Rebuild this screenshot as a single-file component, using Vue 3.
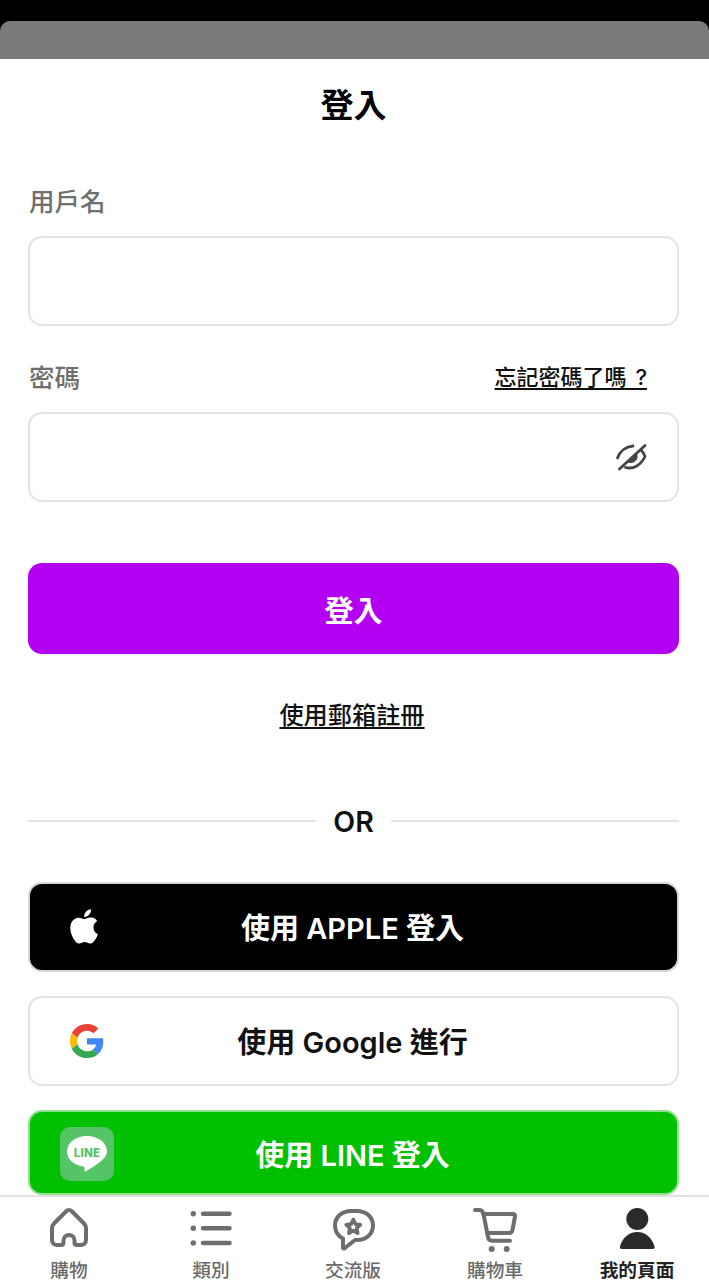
<script setup>
const tabs = [
  { key: 'home', label: '購物' },
  { key: 'list', label: '類別' },
  { key: 'chat', label: '交流版' },
  { key: 'cart', label: '購物車' },
  { key: 'user', label: '我的頁面', active: true }
]
</script>

<template>
  <div class="screen">
    <div class="backdrop"></div>
    <main class="sheet">
      <h1 class="title">登入</h1>

      <div class="label-row first"><span class="label">用戶名</span></div>
      <div class="field"></div>

      <div class="label-row second">
        <span class="label">密碼</span>
        <a class="forgot">忘記密碼了嗎 ?</a>
      </div>
      <div class="field with-icon">
        <svg class="eye" viewBox="0 0 32 32" width="32" height="32" fill="none" stroke="#444" stroke-width="2.8" stroke-linecap="round" stroke-linejoin="round">
          <path d="M2.500 17C5 10 11 5.500 18 5" />
          <path d="M10.500 26.500C18.500 28.500 26 24 30 15.500 29 12.500 27.500 10.500 26 9" />
          <path d="M4.500 28 30 4.500" />
          <path d="M14 21 21.500 13.500C23 17.500 19 22.500 14 21Z" fill="#444" stroke-width="1.500" />
        </svg>
      </div>

      <button class="btn primary">登入</button>
      <a class="register">使用郵箱註冊</a>

      <div class="divider"><span class="line"></span><span class="or">OR</span><span class="line"></span></div>

      <div class="social apple">
        <svg class="social-icon apple-icon" viewBox="0 2 20.500 24.500" width="29" height="35" fill="#fff">
          <path d="M17.300 14.800c0-3 2.500-4.400 2.600-4.500-1.400-2.100-3.600-2.400-4.400-2.400-1.900-.2-3.700 1.100-4.600 1.100-1 0-2.400-1.100-4-1-2 0-3.900 1.200-5 3-2.100 3.700-.5 9.200 1.500 12.200 1 1.500 2.200 3.100 3.800 3 1.500-.1 2.100-1 3.900-1 1.800 0 2.300 1 3.900 1 1.600 0 2.700-1.500 3.700-3 1.200-1.700 1.600-3.400 1.700-3.500-.1 0-3.100-1.200-3.100-4.900Z" />
          <path d="M14.300 5.800c.8-1 1.400-2.400 1.200-3.800-1.200.1-2.700.8-3.500 1.800-.8.900-1.400 2.300-1.300 3.700 1.400.1 2.800-.7 3.600-1.700Z" />
        </svg>
        使用 APPLE 登入
      </div>

      <div class="social google">
        <svg class="social-icon google-icon" viewBox="0 0 48 48" width="34" height="34">
          <path fill="#EA4335" d="M24 9.500c3.540 0 6.710 1.220 9.210 3.600l6.850-6.850C35.900 2.380 30.470 0 24 0 14.620 0 6.510 5.380 2.560 13.220l7.980 6.190C12.430 13.720 17.740 9.500 24 9.500z" />
          <path fill="#4285F4" d="M46.980 24.550c0-1.570-.15-3.090-.38-4.550H24v9.020h12.940c-.58 2.960-2.260 5.480-4.780 7.180l7.730 6c4.510-4.180 7.090-10.360 7.090-17.650z" />
          <path fill="#FBBC05" d="M10.530 28.590c-.48-1.450-.76-2.990-.76-4.590s.27-3.140.76-4.590l-7.980-6.190C.92 16.460 0 20.120 0 24c0 3.880.92 7.540 2.560 10.780l7.970-6.190z" />
          <path fill="#34A853" d="M24 48c6.480 0 11.930-2.130 15.890-5.810l-7.730-6c-2.150 1.450-4.920 2.300-8.160 2.300-6.260 0-11.570-4.220-13.470-9.910l-7.980 6.190C6.510 42.620 14.620 48 24 48z" />
        </svg>
        使用 Google 進行
      </div>

      <div class="social line-btn">
        <div class="line-badge">
          <svg viewBox="2 2 40 36" width="40" height="36">
            <path fill="#fff" d="M22 2C10.500 2 2 9 2 17.500c0 7.800 6.800 13.700 16.500 15 .7.100 1.200.5 1.100 1.300l-.2 2.500c-.1 1 .8 1.400 1.700.9 3.500-2 14-8.300 18-13.200 2.400-2.600 2.900-4.600 2.900-6.500C42 9 33.500 2 22 2Z" />
            <text x="22" y="23" text-anchor="middle" class="line-word">LINE</text>
          </svg>
        </div>
        使用 LINE 登入
      </div>
    </main>

    <nav class="tabbar">
      <div v-for="t in tabs" :key="t.key" class="tab" :class="{ active: t.active }">
        <svg class="tab-icon" viewBox="0 0 48 48" width="48" height="48" fill="none" stroke="#6e6e6e" stroke-width="4" stroke-linecap="round" stroke-linejoin="round">
          <template v-if="t.key === 'home'">
            <path d="M21.500 7 9 19.500C7.700 20.800 7 22.500 7 24.500V36c0 3 2 5 5 5h4c1.500 0 2.500-1 2.500-2.500v-2C18.500 33 21 31 24 31s5.500 2 5.500 5.500v2c0 1.500 1 2.500 2.500 2.500h4c3 0 5-2 5-5V24.500c0-2-.7-3.700-2-5L26.500 7c-1.500-1.500-3.500-1.500-5 0Z" />
          </template>
          <template v-else-if="t.key === 'list'">
            <circle cx="6.300" cy="9.700" r="2.700" fill="#6e6e6e" stroke="none" />
            <circle cx="6.300" cy="24.300" r="2.700" fill="#6e6e6e" stroke="none" />
            <circle cx="6.300" cy="39" r="2.700" fill="#6e6e6e" stroke="none" />
            <path d="M16 9.700h26.500M16 24.300h26.500M16 39h26.500" stroke-width="4.500" />
          </template>
          <template v-else-if="t.key === 'chat'">
            <path d="M22 7h6c9 0 16 6 16 14.500S37 36 28 36h-2l-10.500 8.300c-.8.600-1.500.2-1.500-.8V34.500C9 32 6 27.500 6 21.500 6 13 13 7 22 7Z" />
            <path stroke-width="3.600" d="m24.300 15.500 2.100 4.600 5 .6-3.700 3.400 1 5-4.400-2.500-4.400 2.500 1-5-3.700-3.400 5-.6Z" />
          </template>
          <template v-else-if="t.key === 'cart'">
            <path d="M4 6h4c2.500 0 4 1.500 4.500 4L17 33c.3 2 1.500 3.700 4 3.700h18" />
            <path d="M12 10h30c1.500 0 2.300 1 2 2.500L41.500 26c-.3 2-1.500 3-3.500 3H16" />
            <circle cx="20.700" cy="45" r="3" fill="#6e6e6e" stroke="none" />
            <circle cx="35.700" cy="45" r="3" fill="#6e6e6e" stroke="none" />
          </template>
          <template v-else>
            <circle cx="24.300" cy="15" r="11" fill="#2b2b2b" stroke="none" />
            <path d="M9 45c-2 0-2.500-1-2-2.500C9.500 33.500 16 28 24.300 28s14.700 5.500 17.200 14.500c.5 1.500 0 2.500-2 2.500Z" fill="#2b2b2b" stroke="none" />
          </template>
        </svg>
        <span class="tab-label">{{ t.label }}</span>
      </div>
    </nav>
  </div>
</template>

<style>
html, body { margin: 0; background: #000; }
</style>

<style scoped>
* { box-sizing: border-box; }
.screen {
  width: 709px;
  height: 1280px;
  overflow: hidden;
  display: flex;
  flex-direction: column;
  background: #000;
  padding-top: 21px;
  font-family: Inter, "Noto Sans CJK TC", "Noto Sans", sans-serif;
  color: #111;
}
.backdrop {
  height: 38px;
  flex: none;
  background: #7a7a7a;
  border-radius: 10px 10px 0 0;
}
.sheet {
  flex: 1;
  min-height: 0;
  overflow: hidden;
  background: #fff;
  padding: 0 30px 0 28px;
  display: flex;
  flex-direction: column;
}
.title {
  margin: 22px 0 0;
  font-size: 33px;
  line-height: 48px;
  font-weight: 700;
  text-align: center;
  color: #000;
}
.label-row {
  display: flex;
  justify-content: space-between;
  align-items: center;
  height: 38px;
}
.label-row.first { margin-top: 51px; padding-left: 1px; }
.label-row.second { margin-top: 30px; padding-left: 1px; }
.label-row + .field { margin-top: 18px; }
.label {
  font-size: 25.500px;
  font-weight: 500;
  color: #6f6f6f;
}
.forgot {
  font-size: 22px;
  font-weight: 500;
  word-spacing: 3px;
  color: #111;
  text-decoration: underline;
  text-underline-offset: 3px;
  margin-right: 32px;
}
.field {
  height: 90px;
  flex: none;
  border: 2px solid #e4e4e4;
  border-radius: 14px;
  background: #fff;
}
.with-icon {
  display: flex;
  align-items: center;
  justify-content: flex-end;
  padding-right: 30px;
}
.btn {
  display: block;
  flex: none;
  width: 100%;
  height: 91px;
  margin-top: 61px;
  border: 0;
  border-radius: 14px;
  font-family: inherit;
  font-size: 29px;
  font-weight: 700;
  color: #fff;
}
.primary { background: #b300f3; }
.register {
  align-self: center;
  margin-top: 43px;
  margin-right: 3px;
  font-size: 24.200px;
  line-height: 38px;
  font-weight: 500;
  color: #111;
  text-decoration: underline;
  text-underline-offset: 3px;
}
.divider {
  display: flex;
  align-items: center;
  gap: 17px;
  height: 40px;
  margin-top: 66px;
  flex: none;
}
.line { flex: 1; height: 2px; background: #e2e2e2; }
.or { font-size: 28.500px; font-weight: 600; color: #111; }
.social {
  position: relative;
  flex: none;
  height: 90px;
  border-radius: 14px;
  border: 2px solid #e4e4e4;
  padding: 0 2px 2px 0;
  display: flex;
  align-items: center;
  justify-content: center;
  font-size: 29px;
  font-weight: 600;
}
.social + .social { margin-top: 24px; }
.divider + .social { margin-top: 41px; }
.apple { background: #000; color: #fff; border-color: #d6d6d6; }
.google { background: #fff; color: #111; }
.line-btn { height: 85px; padding-bottom: 0; background: #00c000; color: #fff; border-color: #8fe08f; }
.social-icon { position: absolute; }
.apple-icon { left: 39px; top: 25px; }
.google-icon { left: 40px; top: 26px; }
.line-badge {
  position: absolute;
  left: 30px;
  top: 15px;
  width: 54px;
  height: 54px;
  border-radius: 10px;
  background: #55c467;
  display: flex;
  align-items: center;
  justify-content: center;
}
.line-word { font-family: Inter, sans-serif; font-size: 11.500px; letter-spacing: .2px; font-weight: 800; fill: #55c467; }
.tabbar {
  position: relative;
  flex: none;
  height: 85px;
  background: #fff;
  border-top: 2px solid #e2e2e2;
  display: grid;
  grid-template-columns: repeat(5, 142px);
}
.tab {
  display: flex;
  flex-direction: column;
  align-items: center;
  margin: 0 2px 0 -2px;
  padding-top: 7px;
  color: #6b6b6b;
}
.tab-icon { display: block; width: 48px; height: 48px; }
.tab-label {
  margin-top: 10px;
  font-size: 18.700px;
  line-height: 18px;
  font-weight: 500;
  white-space: nowrap;
}
.tab.active { color: #222; }
.tab.active .tab-label { font-weight: 700; }
</style>
